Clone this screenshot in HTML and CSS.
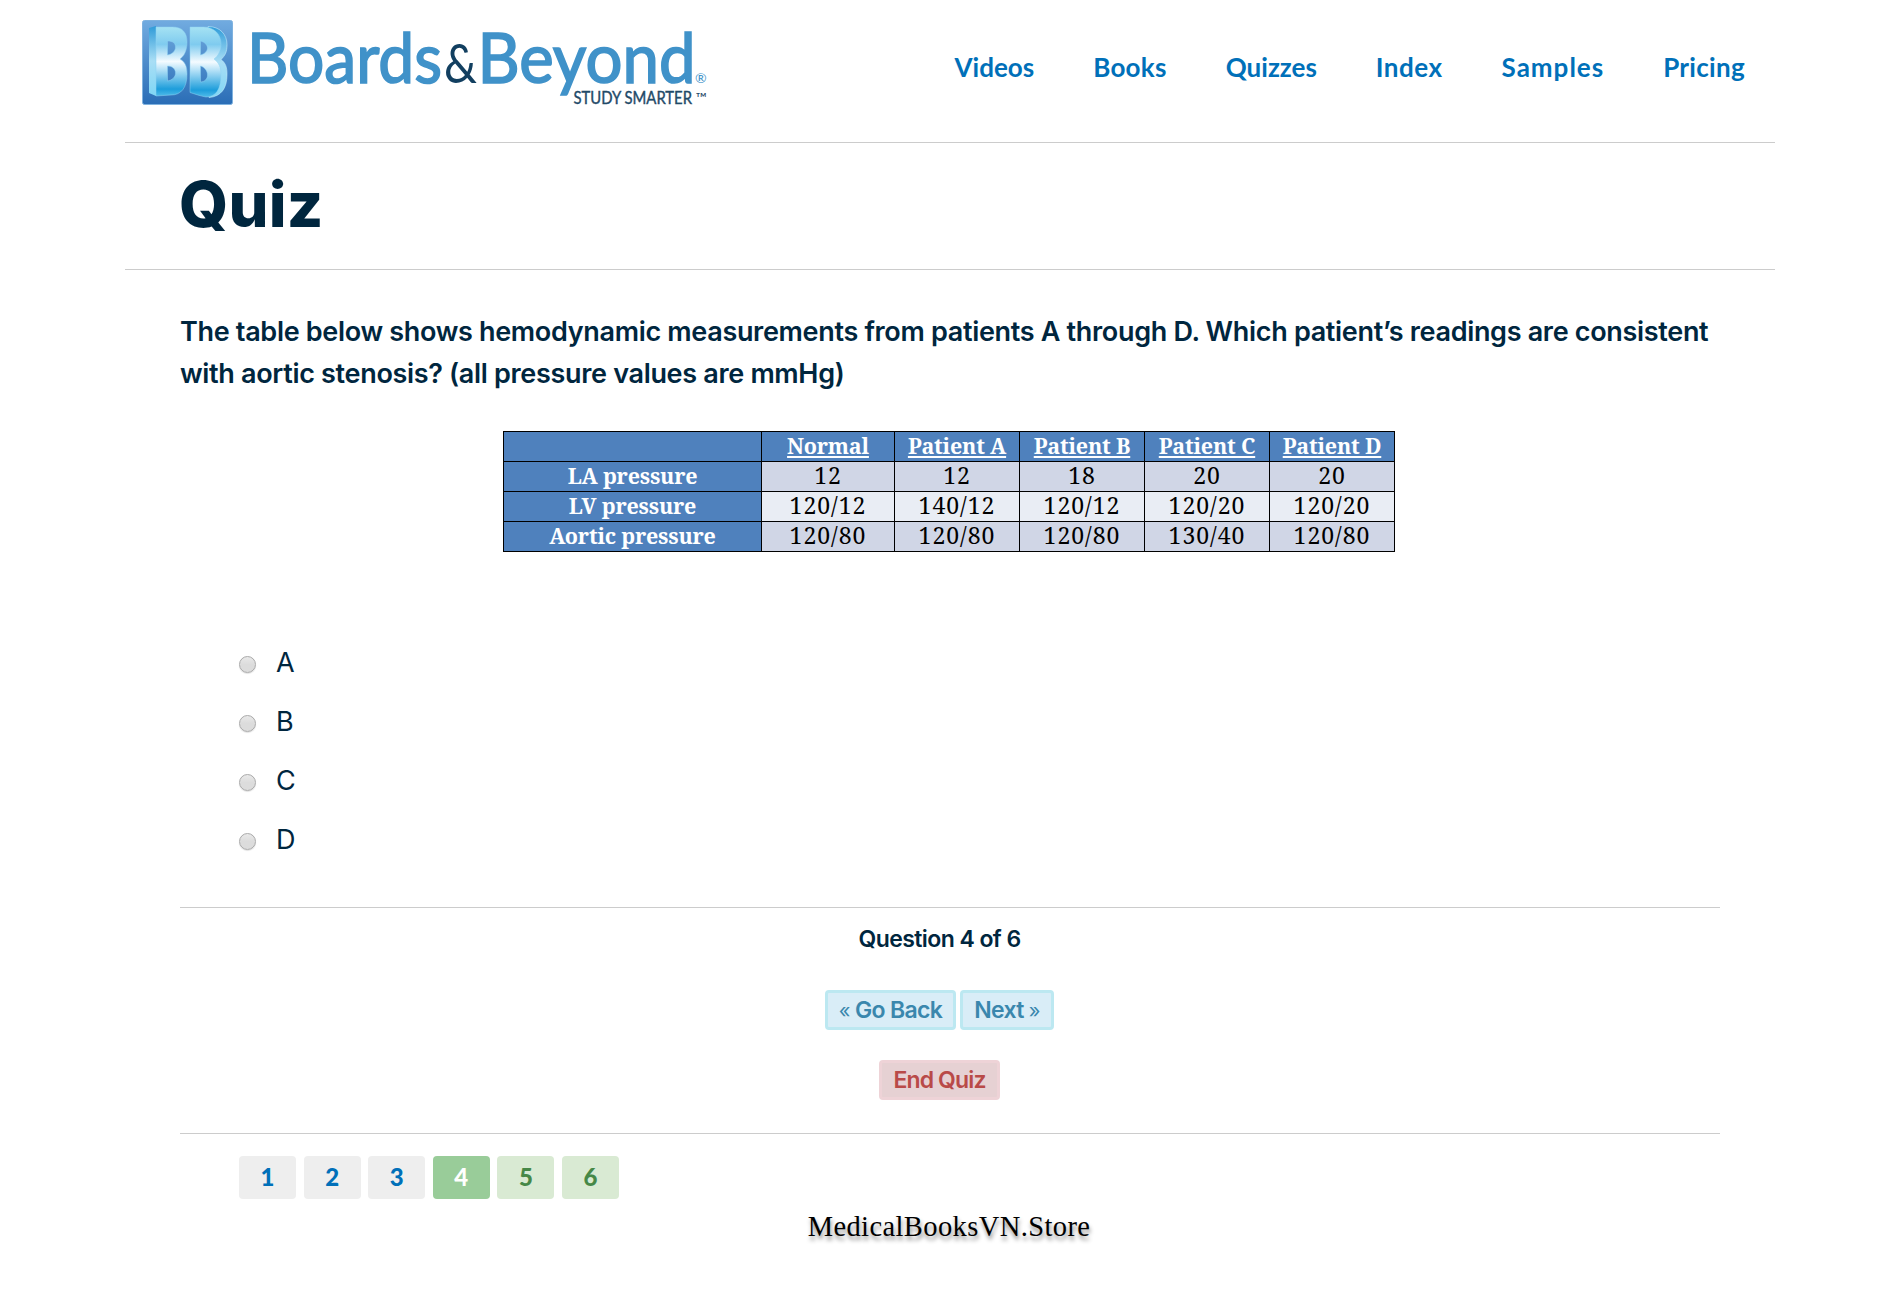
FILE: index.html
```html
<!DOCTYPE html>
<html lang="en">
<head>
<meta charset="utf-8">
<title>Quiz - Boards &amp; Beyond</title>
<link rel="stylesheet" href="styles.css">
</head>
<body>
<div class="page">
  <header class="header">
    <a class="logo" href="#" aria-label="Boards &amp; Beyond">
      <svg width="590" height="100" viewBox="0 0 590 100">
        <defs>
          <linearGradient id="tile" x1="0" y1="0" x2="0" y2="1">
            <stop offset="0" stop-color="#71abe0"/><stop offset="1" stop-color="#2a6db6"/>
          </linearGradient>
          <linearGradient id="face" x1="0" y1="0" x2="0" y2="1">
            <stop offset="0" stop-color="#a5e2f3"/><stop offset=".25" stop-color="#7fcbef"/><stop offset=".5" stop-color="#f4fbff"/><stop offset=".62" stop-color="#b4e1f7"/><stop offset=".9" stop-color="#1d9ddb"/><stop offset="1" stop-color="#4fbbe8"/>
          </linearGradient>
          <linearGradient id="side" x1="0" y1="0" x2="0" y2="1">
            <stop offset="0" stop-color="#2f9bd8"/><stop offset=".5" stop-color="#a9def5"/><stop offset="1" stop-color="#7fd6f5"/>
          </linearGradient>
        </defs>
        <rect x="17.5" y="10.5" width="90" height="84" rx="2" fill="url(#tile)" stroke="#7fb2df"/>
        <path d="M24 18l7-2v70l-7-3z" fill="url(#side)"/>
        <path d="M83 16.500c12 0 19 8 19 18c0 8-2 11-6 15c5 4 6 8 6 15c0 14-6 22-18 23z" fill="url(#side)" stroke="#c5ecfb" stroke-width=".6"/>
        <path fill="url(#face)" stroke="#8fd3f2" stroke-width=".5" fill-rule="evenodd" d="M31 17h16c11 0 15 6 15 15c0 9-3 14-7 17c5 3 7 7 7 15c0 14-6 21-16 21l-15 1zM42.500 31v14c5-1 8-4 8-8s-3-6-8-6zM42.500 56v15c5-1 8-4 8-8s-3-7-8-7z"/>
        <path fill="url(#face)" stroke="#8fd3f2" stroke-width=".5" fill-rule="evenodd" d="M65 17h13c11 0 18 7 18 17c0 7-3 12-7 15c5 4 7 8 7 16c0 14-5 22-15 22c-6-1-11-3-16-4.500zM75.500 31v14c4-1 7-4 7-7s-3-6-7-7zM75.500 56v16c4 0 7-3 7-7s-3-8-7-9z"/>
        <g class="wordmark">
          <text class="word" x="122" y="72.500" textLength="195" lengthAdjust="spacingAndGlyphs">Boards</text>
          <text class="amp" x="319" y="72.500" textLength="33" lengthAdjust="spacingAndGlyphs">&amp;</text>
          <text class="word" x="352.500" y="72.500" textLength="218" lengthAdjust="spacingAndGlyphs">Beyond</text>
          <text class="reg" x="570" y="73">®</text>
          <text class="tag" x="448.500" y="94" textLength="118.500" lengthAdjust="spacingAndGlyphs">STUDY SMARTER</text>
          <text class="tm" x="570.500" y="93" textLength="11" lengthAdjust="spacingAndGlyphs">™</text>
        </g>
      </svg>
    </a>
    <nav class="nav">
      <a href="#">Videos</a><a href="#">Books</a><a href="#">Quizzes</a><a href="#">Index</a><a href="#">Samples</a><a href="#">Pricing</a>
    </nav>
  </header>

  <div class="title"><h1>Quiz</h1></div>

  <main class="content">
    <p class="question">The table below shows hemodynamic measurements from patients A through D. Which patient’s readings are consistent<br>with aortic stenosis? (all pressure values are mmHg)</p>

    <table class="readings">
      <colgroup><col class="c-label"><col class="c-normal"><col><col><col><col></colgroup>
      <tr><th></th><th><u>Normal</u></th><th><u>Patient A</u></th><th><u>Patient B</u></th><th><u>Patient C</u></th><th><u>Patient D</u></th></tr>
      <tr><th>LA pressure</th><td>12</td><td>12</td><td>18</td><td>20</td><td>20</td></tr>
      <tr class="light"><th>LV pressure</th><td>120/12</td><td>140/12</td><td>120/12</td><td>120/20</td><td>120/20</td></tr>
      <tr><th>Aortic pressure</th><td>120/80</td><td>120/80</td><td>120/80</td><td>130/40</td><td>120/80</td></tr>
    </table>

    <div class="answers">
      <label><input type="radio" name="answer">A</label>
      <label><input type="radio" name="answer">B</label>
      <label><input type="radio" name="answer">C</label>
      <label><input type="radio" name="answer">D</label>
    </div>

    <section class="controls">
      <div class="count">Question 4 of 6</div>
      <div class="buttons">
        <button class="btn back"><span class="chev">«</span> Go Back</button>
        <button class="btn next">Next <span class="chev">»</span></button>
      </div>
      <button class="btn end">End Quiz</button>
    </section>

    <div class="pages">
      <a href="#">1</a><a href="#">2</a><a href="#">3</a><a href="#" class="current">4</a><a href="#" class="todo">5</a><a href="#" class="todo">6</a>
    </div>
  </main>

  <footer class="footer">MedicalBooksVN.Store</footer>
</div>
</body>
</html>
```
FILE: styles.css
```css
* { box-sizing: border-box; }
body { margin: 0; background: #fff; color: #00263e; font-family: Inter, "Liberation Sans", sans-serif; }
a { color: #0070b9; text-decoration: none; }
.page { width: 1650px; margin-left: 125px; }

.header { display: flex; justify-content: space-between; height: 143px; padding: 10px 30px 0 0; border-bottom: 1px solid #ccc; }
.logo svg { display: block; }
.wordmark { font-family: Lato, sans-serif; }
.word { font-size: 70px; fill: #4092c9; stroke: #4092c9; stroke-width: 1.7; }
.amp { font-size: 54px; fill: #123f60; }
.tag { font-size: 16.5px; fill: #1f4a68; stroke: #1f4a68; stroke-width: .4; }
.reg { font-size: 14px; fill: #4092c9; }
.tm { font-size: 14px; fill: #1f4a68; }

.nav { display: flex; gap: 59px; padding-top: 42px; }
.nav a { font: 700 26px/30px Lato, sans-serif; }
.nav a:nth-child(2) { letter-spacing: .3px; }
.nav a:nth-child(4) { letter-spacing: .5px; }
.nav a:nth-child(5) { letter-spacing: 1px; }
.nav a:nth-child(6) { letter-spacing: .3px; }

.title { height: 127px; padding: 24px 0 0 54px; border-bottom: 1px solid #ccc; }
.title h1 { margin: 0; font-size: 63px; font-weight: 800; line-height: 74px; letter-spacing: .2px; }

.content { width: 1540px; margin-left: 55px; padding-top: 41px; }
.question { margin: 0; font-size: 27px; font-weight: 600; line-height: 42px; letter-spacing: -.32px; white-space: nowrap; }

.readings { width: 892px; margin: 36px 0 0 323px; border-collapse: collapse; table-layout: fixed; font-family: "Noto Serif", "DejaVu Serif Condensed", serif; }
.readings col { width: 125px; }
.readings .c-label { width: 258px; }
.readings .c-normal { width: 133px; }
.readings tr { height: 30px; }
.readings th, .readings td { height: 30px; padding: 0 0 2px; border: 1px solid #000; text-align: center; line-height: 27px; white-space: nowrap; }
.readings th { background: #4f81bd; color: #fff; font-size: 21.5px; letter-spacing: -.2px; }
.readings td { background: #d0d6e6; color: #000; font-size: 23px; letter-spacing: 1px; }
.readings .light td { background: #e9edf4; }
.readings u { text-decoration-thickness: 2px; text-underline-offset: 2px; }

.answers { display: flex; flex-direction: column; padding: 81px 0 0 59px; }
.answers label { display: flex; align-items: center; height: 59px; font-size: 27px; font-weight: 400; line-height: 59px; }
.answers input { appearance: none; width: 17px; height: 17px; margin: 3px 20px 0 0; border: 1px solid #a9a9a9; border-radius: 50%; background: linear-gradient(#e9e9e9, #dcdcdc 50%); box-shadow: 0 1px 1px rgba(0, 0, 0, .12); }

.controls { display: flex; flex-direction: column; align-items: center; height: 227px; margin-top: 38px; padding: 17px 21px 0 0; border: solid #ccc; border-width: 1px 0; }
.count { font-size: 23px; font-weight: 600; line-height: 28px; letter-spacing: -.57px; }
.buttons { display: flex; gap: 4px; margin: 37px 0 30px; }
.btn { height: 40px; padding: 0; border: 3px solid; border-radius: 4px; font: 600 23px/32px Inter, sans-serif; letter-spacing: -.65px; white-space: nowrap; }
.back, .next { background: #d9edf7; border-color: #bce8f1; color: #3a87ad; }
.back { width: 131px; }
.next { width: 94px; }
.end { width: 121px; background: #e6d1d3; border-color: #eed3d7; color: #b94a48; letter-spacing: -.85px; }
.chev { font-weight: 400; font-size: 20px; }

.pages { display: flex; gap: 7.6px; padding: 22px 0 0 59px; }
.pages a { width: 57px; height: 43px; border-radius: 4px; background: #eee; font: 900 24px/42px Lato, sans-serif; text-align: center; }
.pages .current { background: #9c9; color: #fff; }
.pages .todo { background: #d9ead3; color: #468847; }

.footer { width: 1648px; margin-top: 9px; text-align: center; color: #000; font: 28.5px/38px "Liberation Serif", serif; letter-spacing: .4px; text-shadow: 1px 4px 4px rgba(0, 0, 0, .45); }
```
